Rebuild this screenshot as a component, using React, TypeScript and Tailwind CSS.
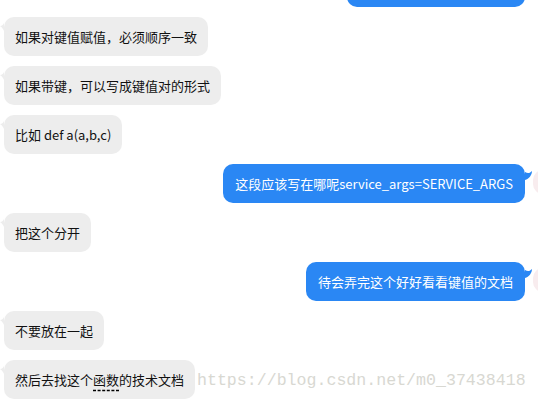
import type { ReactNode } from "react";

type Msg = { side: "left" | "right"; text: ReactNode; width?: string };

const MESSAGES: Msg[] = [
  { side: "right", text: null, width: "w-[178px]" },
  { side: "left", text: "如果对键值赋值，必须顺序一致" },
  { side: "left", text: "如果带键，可以写成键值对的形式" },
  { side: "left", text: "比如 def a(a,b,c)" },
  { side: "right", text: "这段应该写在哪呢service_args=SERVICE_ARGS" },
  { side: "left", text: "把这个分开" },
  { side: "right", text: "待会弄完这个好好看看键值的文档" },
  { side: "left", text: "不要放在一起" },
  {
    side: "left",
    text: (
      <>
        然后去找这个
        <span className="underline decoration-dashed decoration-black underline-offset-[5px]">函数</span>
        的技术文档
      </>
    ),
  },
];

function LeftTail() {
  return (
    <svg className="mt-[6px] shrink-0" width="4" height="8" viewBox="0 0 4 8">
      <path d="M4 0 C3 2 2 3 0 3 C2 4 3 6 4 8 Z" fill="#ededed" />
    </svg>
  );
}

function RightTail() {
  return (
    <svg className="mt-[7px] shrink-0" width="7" height="10" viewBox="0 0 7 10">
      <path d="M0 1 C3 3 5 2 7 0 C7 4 4 8 0 9 Z" fill="#2a87f4" />
    </svg>
  );
}

export default function App() {
  return (
    <div
      className="relative h-[402px] w-[538px] overflow-hidden bg-white"
      style={{ fontFamily: '"Noto Sans CJK SC", "Noto Sans", sans-serif' }}
    >
      <div className="-mt-[32px] flex flex-col gap-[10px]">
        {MESSAGES.map((m, i) =>
          m.side === "left" ? (
            <div key={i} className="flex items-start justify-start">
              <LeftTail />
              <div className="flex h-[39px] items-center whitespace-nowrap rounded-[10px] bg-[#ededed] px-[11px] text-[13px] text-[#111]">
                {m.text}
              </div>
            </div>
          ) : (
            <div key={i} className="flex items-start justify-end">
              <div
                className={`flex h-[39px] items-center whitespace-nowrap rounded-[10px] bg-[#2a87f4] px-[12px] text-[13px] text-white ${m.width ?? ""}`}
              >
                {m.text}
              </div>
              <RightTail />
              <div className="-mr-[15px] ml-[1px] mt-[6px] h-[24px] w-[20px] shrink-0 rounded-full bg-[#f8ecee]" />
            </div>
          )
        )}
      </div>

      {/* csdn watermark */}
      <div
        className="pointer-events-none absolute left-[197px] top-[368px] text-[16.6px] leading-[26px] text-[#d8d8d2]"
        style={{ fontFamily: '"Liberation Mono", monospace' }}
      >
        https://blog.csdn.net/m0_37438418
      </div>
    </div>
  );
}
